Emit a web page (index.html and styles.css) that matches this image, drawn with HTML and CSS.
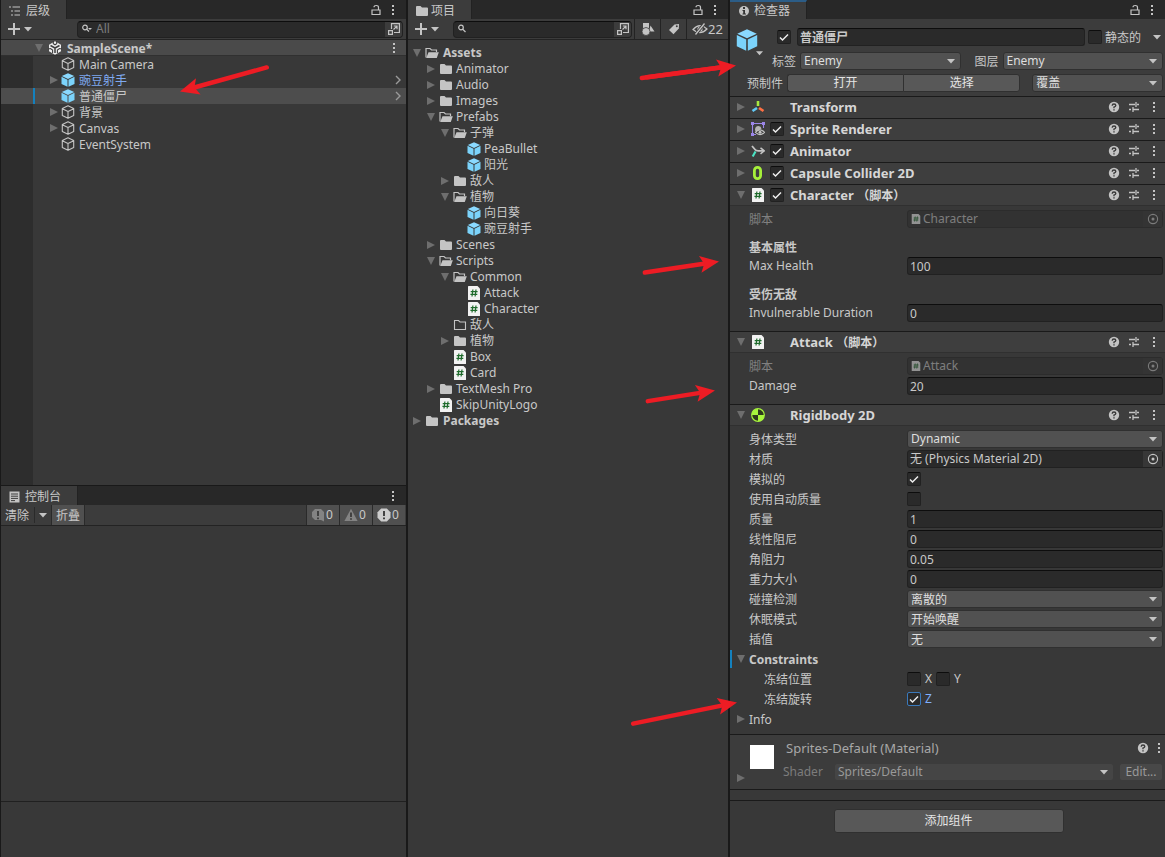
FILE: index.html
```html
<!DOCTYPE html>
<html lang="zh-CN">
<head>
<meta charset="utf-8">
<title>SampleScene</title>
<link rel="stylesheet" href="styles.css">
</head>
<body>
<svg class="sprite" aria-hidden="true">
  <symbol id="cube" viewBox="0 0 14 14"><path d="M7 .8 12.7 3.6V10.4L7 13.3 1.3 10.4V3.6ZM1.3 3.8 7 6.5 12.7 3.8M7 6.5V13.2" fill="none" stroke="#c4c4c4" stroke-width="1.1" stroke-linejoin="round"/></symbol>
  <symbol id="prefab" viewBox="0 0 14 14"><path d="M7 .2 13.2 3 7 5.9.8 3Z" fill="#8ad9ff"/><path d="M.5 3.8 6.5 6.7V13.8L.5 10.9Z" fill="#7bd3fb"/><path d="M13.5 3.8 7.5 6.7V13.8L13.5 10.9Z" fill="#7bd3fb"/></symbol>
  <symbol id="folder" viewBox="0 0 14 14"><path d="M1 3Q1 2 2 2H5.500L7 3.500H12Q13 3.500 13 4.500V11Q13 12 12 12H2Q1 12 1 11Z" fill="#c4c4c4"/></symbol>
  <symbol id="folder-open" viewBox="0 0 14 14"><path d="M1 11.500V2.500H5L6.500 4H11.500V6" fill="none" stroke="#c4c4c4" stroke-width="1.200"/><path d="M3.500 6.200H13.800L11.800 12H1.200Z" fill="#c4c4c4"/></symbol>
  <symbol id="folder-empty" viewBox="0 0 14 14"><path d="M1.500 2.500H5.500L7 4H12.500V11.500H1.500Z" fill="none" stroke="#c4c4c4" stroke-width="1.100"/></symbol>
  <symbol id="script" viewBox="0 0 14 14"><path d="M1 .5Q1 0 1.500 0H10.500L13 2.500V13.500Q13 14 12.500 14H1.500Q1 14 1 13.500Z" fill="#f2f2f2"/><path d="M5.900 3.500 5 10.500M9 3.500 8.100 10.500M3.700 5.600H10.600M3.400 8.400H10.300" stroke="#1f6b2c" stroke-width="1.200" fill="none"/></symbol>
  <symbol id="unity" viewBox="0 0 14 14"><path d="M7 .3 13 3.700V10.300L7 13.700 1 10.300V3.700Z" fill="#eee"/><path d="M7 7V12M7 7 2.500 4.500M7 7 11.500 4.500" stroke="#3e3e3e" stroke-width="1.500"/><path d="M5.300 0V2.800L7 3.800 8.700 2.800V0M0 8 2.500 7.500 4.600 9V12M14 8 11.500 7.500 9.400 9V12" fill="none" stroke="#3e3e3e" stroke-width="1.100"/></symbol>
  <symbol id="lock" viewBox="0 0 10 12"><path d="M1 6H9V10.500H1ZM7.500 6V3.500Q7.500 1.500 5.200 1.500 3 1.500 3 3.200" fill="none" stroke="#c4c4c4" stroke-width="1.200"/></symbol>
  <symbol id="dots" viewBox="0 0 4 12"><path d="M1 1H3V3H1ZM1 5H3V7H1ZM1 9H3V11H1Z" fill="#c4c4c4"/></symbol>
  <symbol id="plus" viewBox="0 0 12 12"><path d="M6 0V12M0 6H12" stroke="#c4c4c4" stroke-width="2"/></symbol>
  <symbol id="down" viewBox="0 0 8 5"><path d="M0 0H8L4 4.500Z" fill="#c4c4c4"/></symbol>
  <symbol id="fold-right" viewBox="0 0 8 8"><path d="M0 0 8 4 0 8Z" fill="#6e6e6e"/></symbol>
  <symbol id="fold-down" viewBox="0 0 8 8"><path d="M0 0H8L4 8Z" fill="#6e6e6e"/></symbol>
  <symbol id="chevron" viewBox="0 0 6 10"><path d="M1 1 5 5 1 9" fill="none" stroke="#9a9a9a" stroke-width="1.400"/></symbol>
  <symbol id="search" viewBox="0 0 10 10"><circle cx="3" cy="3.500" r="2.300" fill="none" stroke="#c4c4c4" stroke-width="1.200"/><path d="M4.600 5.100 7.500 8" stroke="#c4c4c4" stroke-width="1.300"/></symbol>
  <symbol id="search-type" viewBox="0 0 10 10"><circle cx="3" cy="3.500" r="2.300" fill="none" stroke="#c4c4c4" stroke-width="1.200"/><path d="M4.600 5.100 7 7.500" stroke="#c4c4c4" stroke-width="1.300"/><path d="M6 4H10L8 6Z" fill="#c4c4c4"/></symbol>
  <symbol id="popout" viewBox="0 0 12 12"><path d="M3.500 6V.6H11.400V9.500H6M5.500 6.500 8.700 3.300M5.800 3H9V6.200M.6 7.600H4.400V11.400H.6Z" fill="none" stroke="#c4c4c4" stroke-width="1.200"/></symbol>
  <symbol id="shapes" viewBox="0 0 14 14"><path d="M2 1H8V6H2ZM9.500 3.500 13.500 9.500H8Z" fill="#c4c4c4"/><circle cx="5" cy="9.500" r="4" fill="#c4c4c4" stroke="#3c3c3c" stroke-width=".8"/></symbol>
  <symbol id="tag" viewBox="0 0 12 12"><path d="M6.500 1.500 11 1 10.800 5.500 5.500 11.200 1 7Z" fill="#c4c4c4"/><circle cx="8.800" cy="3.300" r="1" fill="#3c3c3c"/></symbol>
  <symbol id="eye-off" viewBox="0 0 16 12"><path d="M1 6.500Q8-1 15 6 8 13 1 6.500Z" fill="none" stroke="#c4c4c4" stroke-width="1.200"/><circle cx="8" cy="6" r="2.600" fill="#c4c4c4"/><path d="M12.500 0 3.500 12" stroke="#3c3c3c" stroke-width="3"/><path d="M12.500.5 3.500 11.500" stroke="#c4c4c4" stroke-width="1.300"/></symbol>
  <symbol id="tree" viewBox="0 0 12 10"><path d="M0 1H2M3.500 1H11M2 5H4M5.500 5H11M2 9H4M5.500 9H11" stroke="#c4c4c4" stroke-width="1.200"/></symbol>
  <symbol id="doc" viewBox="0 0 11 12"><path d="M.5.500H10.500V11.500H.5Z" fill="#c4c4c4"/><path d="M2 3H9M2 5.200H9M2 7.400H9M2 9.600H6" stroke="#3c3c3c"/></symbol>
  <symbol id="info" viewBox="0 0 12 12"><circle cx="6" cy="6" r="5" fill="#c4c4c4"/><path d="M5 2H7V4H5ZM4.500 5H7V8.500H8V9.500H4.500V8.500H5.200V6H4.500Z" fill="#333"/></symbol>
  <symbol id="help" viewBox="0 0 12 12"><circle cx="6" cy="6" r="5.200" fill="#c4c4c4"/><path d="M4.200 4.700Q4.200 3 6 3T7.800 4.600Q7.800 5.600 6 6.100V7.200M6 8.200V9.600" fill="none" stroke="#3a3a3a" stroke-width="1.400"/></symbol>
  <symbol id="sliders" viewBox="0 0 12 12"><path d="M1 3.500H7M9 3.500H11M8 1V6M1 8.500H3M5 8.500H11M5 6V11" fill="none" stroke="#c4c4c4" stroke-width="1.300"/></symbol>
  <symbol id="picker" viewBox="0 0 12 12"><circle cx="6" cy="6" r="4.600" fill="none" stroke="#c4c4c4" stroke-width="1.100"/><circle cx="6" cy="6" r="1.500" fill="#c4c4c4"/></symbol>
  <symbol id="transform" viewBox="0 0 14 14"><path d="M7 1V6" stroke="#a8e840" stroke-width="2.600"/><path d="M6 8 1.500 11" stroke="#62c8f5" stroke-width="2.600"/><path d="M8 8 12.500 11" stroke="#ff7043" stroke-width="2.600"/></symbol>
  <symbol id="sprite-renderer" viewBox="0 0 14 14"><path d="M1.500 12.500V1.500H12.500V6M1.500 12.500H5" fill="none" stroke="#9b86e8" stroke-width="1.100"/><path d="M0 0H3V3H0ZM11 0H14V3H11ZM0 11H3V14H0Z" fill="#9b86e8"/><path d="M4 8Q4 4 7.500 4 10 4 10.500 6.500L5 10.500Z" fill="#b4b4b4"/><path d="M4.500 10.300Q9 5.500 13.500 10.300 9 14.800 4.500 10.300Z" fill="#3e3e3e" stroke="#c4c4c4" stroke-width="1.200"/><circle cx="9" cy="10.200" r="1.500" fill="#c4c4c4"/></symbol>
  <symbol id="animator" viewBox="0 0 14 14"><path d="M1 2 4 5.500Q5 7 8 6.800H12" fill="none" stroke="#c4c4c4" stroke-width="1.800"/><path d="M9.500 3.800 13.300 6.800 9.500 9.800" fill="none" stroke="#c4c4c4" stroke-width="1.500"/><path d="M4.500 7.500 1.700 12.500" stroke="#4be3c4" stroke-width="2.200"/></symbol>
  <symbol id="capsule" viewBox="0 0 14 14"><rect x="3.400" y="1.400" width="6.200" height="11.200" rx="3" fill="none" stroke="#a6f03a" stroke-width="2.800"/></symbol>
  <symbol id="rigidbody" viewBox="0 0 14 14"><circle cx="7" cy="7" r="6.300" fill="#2f3a1c" stroke="#a8f53d" stroke-width="1.200"/><path d="M7 7V.7A6.300 6.300 0 0 0 .7 7ZM7 7V13.300A6.300 6.300 0 0 0 13.300 7Z" fill="#a8f53d"/></symbol>
  <symbol id="log" viewBox="0 0 14 14"><path d="M4 1H10L13 4V13.500L10 12H4L1 9V4Z" fill="#838383"/><path d="M7 3V8M7 9.500V11.300" stroke="#3a3a3a" stroke-width="1.800"/></symbol>
  <symbol id="warn" viewBox="0 0 14 14"><path d="M7 .8 13.600 13H.4Z" fill="#838383"/><path d="M7 4.500V9M7 10.200V11.800" stroke="#3a3a3a" stroke-width="1.800"/></symbol>
  <symbol id="error" viewBox="0 0 14 14"><path d="M4.200.5H9.800L13.500 4.200V9.800L9.800 13.500H4.200L.5 9.800V4.200Z" fill="#cdcdcd"/><path d="M7 3V8M7 9.500V11.300" stroke="#333" stroke-width="1.800"/></symbol>
</svg>

<main class="editor">
  <div class="left">
    <section class="panel hierarchy" aria-label="层级">
      <header class="tabs">
        <button class="tab"><svg class="i12"><use href="#tree"/></svg>层级</button>
        <span class="tools"><svg class="lock"><use href="#lock"/></svg><svg class="dots"><use href="#dots"/></svg></span>
      </header>
      <div class="toolbar">
        <button class="add" aria-label="添加"><svg class="i12"><use href="#plus"/></svg><svg class="down"><use href="#down"/></svg></button>
        <label class="search search-wide"><svg class="i10"><use href="#search-type"/></svg><input type="text" placeholder="All" aria-label="搜索层级"><span class="popout"><svg class="i12"><use href="#popout"/></svg></span></label>
      </div>
      <div class="scene"><svg class="fold"><use href="#fold-down"/></svg><svg class="i14"><use href="#unity"/></svg><b class="name">SampleScene*</b><svg class="dots"><use href="#dots"/></svg></div>
      <ul class="objects">
        <li><i class="fold"></i><svg class="i14"><use href="#cube"/></svg><span class="name">Main Camera</span></li>
        <li class="linked"><svg class="fold"><use href="#fold-right"/></svg><svg class="i14"><use href="#prefab"/></svg><span class="name">豌豆射手</span><svg class="chevron"><use href="#chevron"/></svg></li>
        <li class="selected"><i class="fold"></i><svg class="i14"><use href="#prefab"/></svg><span class="name">普通僵尸</span><svg class="chevron"><use href="#chevron"/></svg></li>
        <li><svg class="fold"><use href="#fold-right"/></svg><svg class="i14"><use href="#cube"/></svg><span class="name">背景</span></li>
        <li><svg class="fold"><use href="#fold-right"/></svg><svg class="i14"><use href="#cube"/></svg><span class="name">Canvas</span></li>
        <li><i class="fold"></i><svg class="i14"><use href="#cube"/></svg><span class="name">EventSystem</span></li>
      </ul>
    </section>
    <section class="panel console" aria-label="控制台">
      <header class="tabs">
        <button class="tab"><svg class="doc"><use href="#doc"/></svg>控制台</button>
        <span class="tools"><svg class="dots"><use href="#dots"/></svg></span>
      </header>
      <div class="toolbar console-bar">
        <button class="clear">清除</button><button class="clear-menu" aria-label="清除选项"><svg class="down"><use href="#down"/></svg></button><button class="toggle">折叠</button>
        <span class="space"></span>
        <button class="toggle count"><svg class="i14"><use href="#log"/></svg>0</button><button class="toggle count"><svg class="i14"><use href="#warn"/></svg>0</button><button class="toggle count"><svg class="i14"><use href="#error"/></svg>0</button>
      </div>
      <div class="log"></div>
      <div class="detail"></div>
    </section>
  </div>

  <section class="panel project" aria-label="项目">
    <header class="tabs">
      <button class="tab"><svg class="i14"><use href="#folder"/></svg>项目</button>
      <span class="tools"><svg class="lock"><use href="#lock"/></svg><svg class="dots"><use href="#dots"/></svg></span>
    </header>
    <div class="toolbar">
      <button class="add" aria-label="创建"><svg class="i12"><use href="#plus"/></svg><svg class="down"><use href="#down"/></svg></button>
      <label class="search"><svg class="i10"><use href="#search"/></svg><input type="text" aria-label="搜索项目"><span class="popout"><svg class="i12"><use href="#popout"/></svg></span></label>
      <button class="filter" aria-label="按类型"><svg class="i14"><use href="#shapes"/></svg></button><button class="filter" aria-label="按标签"><svg class="i12"><use href="#tag"/></svg></button><button class="filter hidden-count"><svg class="eye"><use href="#eye-off"/></svg>22</button>
    </div>
    <ul class="files">
      <li><svg class="fold"><use href="#fold-down"/></svg><svg class="i14"><use href="#folder-open"/></svg><b>Assets</b></li>
      <li class="d1"><svg class="fold"><use href="#fold-right"/></svg><svg class="i14"><use href="#folder"/></svg>Animator</li>
      <li class="d1"><svg class="fold"><use href="#fold-right"/></svg><svg class="i14"><use href="#folder"/></svg>Audio</li>
      <li class="d1"><svg class="fold"><use href="#fold-right"/></svg><svg class="i14"><use href="#folder"/></svg>Images</li>
      <li class="d1"><svg class="fold"><use href="#fold-down"/></svg><svg class="i14"><use href="#folder-open"/></svg>Prefabs</li>
      <li class="d2"><svg class="fold"><use href="#fold-down"/></svg><svg class="i14"><use href="#folder-open"/></svg>子弹</li>
      <li class="d3"><i class="fold"></i><svg class="i14"><use href="#prefab"/></svg>PeaBullet</li>
      <li class="d3"><i class="fold"></i><svg class="i14"><use href="#prefab"/></svg>阳光</li>
      <li class="d2"><svg class="fold"><use href="#fold-right"/></svg><svg class="i14"><use href="#folder"/></svg>敌人</li>
      <li class="d2"><svg class="fold"><use href="#fold-down"/></svg><svg class="i14"><use href="#folder-open"/></svg>植物</li>
      <li class="d3"><i class="fold"></i><svg class="i14"><use href="#prefab"/></svg>向日葵</li>
      <li class="d3"><i class="fold"></i><svg class="i14"><use href="#prefab"/></svg>豌豆射手</li>
      <li class="d1"><svg class="fold"><use href="#fold-right"/></svg><svg class="i14"><use href="#folder"/></svg>Scenes</li>
      <li class="d1"><svg class="fold"><use href="#fold-down"/></svg><svg class="i14"><use href="#folder-open"/></svg>Scripts</li>
      <li class="d2"><svg class="fold"><use href="#fold-down"/></svg><svg class="i14"><use href="#folder-open"/></svg>Common</li>
      <li class="d3"><i class="fold"></i><svg class="i14"><use href="#script"/></svg>Attack</li>
      <li class="d3"><i class="fold"></i><svg class="i14"><use href="#script"/></svg>Character</li>
      <li class="d2"><i class="fold"></i><svg class="i14"><use href="#folder-empty"/></svg>敌人</li>
      <li class="d2"><svg class="fold"><use href="#fold-right"/></svg><svg class="i14"><use href="#folder"/></svg>植物</li>
      <li class="d2"><i class="fold"></i><svg class="i14"><use href="#script"/></svg>Box</li>
      <li class="d2"><i class="fold"></i><svg class="i14"><use href="#script"/></svg>Card</li>
      <li class="d1"><svg class="fold"><use href="#fold-right"/></svg><svg class="i14"><use href="#folder"/></svg>TextMesh Pro</li>
      <li class="d1"><i class="fold"></i><svg class="i14"><use href="#script"/></svg>SkipUnityLogo</li>
      <li><svg class="fold"><use href="#fold-right"/></svg><svg class="i14"><use href="#folder"/></svg><b>Packages</b></li>
    </ul>
  </section>

  <section class="panel inspector" aria-label="检查器">
    <header class="tabs">
      <button class="tab focused"><svg class="i12"><use href="#info"/></svg>检查器</button>
      <span class="tools"><svg class="lock"><use href="#lock"/></svg><svg class="dots"><use href="#dots"/></svg></span>
    </header>

    <div class="object">
      <div class="object-icon"><svg class="i22"><use href="#prefab"/></svg><svg class="down"><use href="#down"/></svg></div>
      <div class="object-name">
        <input type="checkbox" checked aria-label="激活">
        <input class="text bold" type="text" value="普通僵尸" aria-label="名称">
        <label class="static"><input type="checkbox"><span>静态的</span></label>
        <svg class="down"><use href="#down"/></svg>
      </div>
      <div class="object-tags">
        <label for="tag-select">标签</label><select id="tag-select"><option>Enemy</option></select>
        <label class="layer" for="layer-select">图层</label><select id="layer-select"><option>Enemy</option></select>
      </div>
      <div class="object-prefab">
        <span>预制件</span>
        <div class="pair"><button class="push">打开</button><button class="push">选择</button></div>
        <select class="overrides" aria-label="覆盖"><option>覆盖</option></select>
      </div>
    </div>

    <h2 class="component"><svg class="fold"><use href="#fold-right"/></svg><svg class="i14"><use href="#transform"/></svg><i class="box"></i><span class="title">Transform</span><svg class="i12"><use href="#help"/></svg><svg class="i12"><use href="#sliders"/></svg><svg class="dots"><use href="#dots"/></svg></h2>
    <h2 class="component"><svg class="fold"><use href="#fold-right"/></svg><svg class="i14"><use href="#sprite-renderer"/></svg><input type="checkbox" checked aria-label="Sprite Renderer"><span class="title">Sprite Renderer</span><svg class="i12"><use href="#help"/></svg><svg class="i12"><use href="#sliders"/></svg><svg class="dots"><use href="#dots"/></svg></h2>
    <h2 class="component"><svg class="fold"><use href="#fold-right"/></svg><svg class="i14"><use href="#animator"/></svg><input type="checkbox" checked aria-label="Animator"><span class="title">Animator</span><svg class="i12"><use href="#help"/></svg><svg class="i12"><use href="#sliders"/></svg><svg class="dots"><use href="#dots"/></svg></h2>
    <h2 class="component"><svg class="fold"><use href="#fold-right"/></svg><svg class="i14"><use href="#capsule"/></svg><input type="checkbox" checked aria-label="Capsule Collider 2D"><span class="title">Capsule Collider 2D</span><svg class="i12"><use href="#help"/></svg><svg class="i12"><use href="#sliders"/></svg><svg class="dots"><use href="#dots"/></svg></h2>

    <h2 class="component open"><svg class="fold"><use href="#fold-down"/></svg><svg class="i14"><use href="#script"/></svg><input type="checkbox" checked aria-label="Character"><span class="title">Character <small>（脚本）</small></span><svg class="i12"><use href="#help"/></svg><svg class="i12"><use href="#sliders"/></svg><svg class="dots"><use href="#dots"/></svg></h2>
    <div class="fields">
      <div class="field off"><span>脚本</span><div class="ref"><svg class="i10"><use href="#script"/></svg><span class="name">Character</span><span class="pick"><svg class="i12"><use href="#picker"/></svg></span></div></div>
      <h3>基本属性</h3>
      <div class="field"><label for="health">Max Health</label><input class="text" id="health" type="text" value="100"></div>
      <h3>受伤无敌</h3>
      <div class="field"><label for="invulnerable">Invulnerable Duration</label><input class="text" id="invulnerable" type="text" value="0"></div>
    </div>

    <h2 class="component open"><svg class="fold"><use href="#fold-down"/></svg><svg class="i14"><use href="#script"/></svg><i class="box"></i><span class="title">Attack <small>（脚本）</small></span><svg class="i12"><use href="#help"/></svg><svg class="i12"><use href="#sliders"/></svg><svg class="dots"><use href="#dots"/></svg></h2>
    <div class="fields">
      <div class="field off"><span>脚本</span><div class="ref"><svg class="i10"><use href="#script"/></svg><span class="name">Attack</span><span class="pick"><svg class="i12"><use href="#picker"/></svg></span></div></div>
      <div class="field"><label for="damage">Damage</label><input class="text" id="damage" type="text" value="20"></div>
    </div>

    <h2 class="component open"><svg class="fold"><use href="#fold-down"/></svg><svg class="i14"><use href="#rigidbody"/></svg><i class="box"></i><span class="title">Rigidbody 2D</span><svg class="i12"><use href="#help"/></svg><svg class="i12"><use href="#sliders"/></svg><svg class="dots"><use href="#dots"/></svg></h2>
    <div class="fields body">
      <div class="field"><label for="body-type">身体类型</label><select id="body-type"><option>Dynamic</option></select></div>
      <div class="field"><span>材质</span><div class="ref"><span class="name">无 (Physics Material 2D)</span><span class="pick"><svg class="i12"><use href="#picker"/></svg></span></div></div>
      <div class="field"><label for="simulated">模拟的</label><input id="simulated" type="checkbox" checked></div>
      <div class="field"><label for="auto-mass">使用自动质量</label><input id="auto-mass" type="checkbox"></div>
      <div class="field"><label for="mass">质量</label><input class="text" id="mass" type="text" value="1"></div>
      <div class="field"><label for="linear">线性阻尼</label><input class="text" id="linear" type="text" value="0"></div>
      <div class="field"><label for="angular">角阻力</label><input class="text" id="angular" type="text" value="0.05"></div>
      <div class="field"><label for="gravity">重力大小</label><input class="text" id="gravity" type="text" value="0"></div>
      <div class="field"><label for="collision">碰撞检测</label><select class="han" id="collision"><option>离散的</option></select></div>
      <div class="field"><label for="sleep">休眠模式</label><select class="han" id="sleep"><option>开始唤醒</option></select></div>
      <div class="field"><label for="interpolate">插值</label><select class="han" id="interpolate"><option>无</option></select></div>
      <div class="group changed"><svg class="fold"><use href="#fold-down"/></svg><b>Constraints</b></div>
      <div class="field sub"><span>冻结位置</span><div class="axes"><label><input type="checkbox">X</label><label><input type="checkbox">Y</label></div></div>
      <div class="field sub"><span>冻结旋转</span><div class="axes"><label class="active"><input type="checkbox" checked>Z</label></div></div>
      <div class="group"><svg class="fold"><use href="#fold-right"/></svg><span>Info</span></div>
    </div>

    <div class="material">
      <svg class="fold"><use href="#fold-right"/></svg>
      <div class="swatch"></div>
      <div class="material-info">
        <div class="material-title"><span class="title">Sprites-Default (Material)</span><svg class="i12"><use href="#help"/></svg><svg class="dots"><use href="#dots"/></svg></div>
        <div class="shader"><label for="shader">Shader</label><select id="shader" disabled><option>Sprites/Default</option></select><button class="push" disabled>Edit...</button></div>
      </div>
    </div>
    <div class="spacer"></div>
    <div class="footer"><button class="push add-component">添加组件</button></div>
  </section>
</main>

<svg class="marks" viewBox="0 0 1165 857" preserveAspectRatio="xMinYMin meet" aria-hidden="true">
  <defs><g id="mark"><path d="M-90 0H-12" stroke="#ed1c24" stroke-width="4.500" stroke-linecap="round"/><path d="M0 0-19-8.500-15 0-19 8.500Z" fill="#ed1c24"/></g></defs>
  <g transform="translate(180 91.500) rotate(164.500)"><use href="#mark"/></g>
  <g transform="translate(736 65.500) rotate(-7.500)"><path d="M-95 0H-12" stroke="#ed1c24" stroke-width="4.500" stroke-linecap="round"/><use href="#mark"/></g>
  <g transform="translate(719 261.500) rotate(-8.500)"><path d="M-75 0H-12" stroke="#ed1c24" stroke-width="4.500" stroke-linecap="round"/><path d="M0 0-19-8.500-15 0-19 8.500Z" fill="#ed1c24"/></g>
  <g transform="translate(715 390.500) rotate(-9)"><path d="M-68 0H-12" stroke="#ed1c24" stroke-width="4.500" stroke-linecap="round"/><path d="M0 0-19-8.500-15 0-19 8.500Z" fill="#ed1c24"/></g>
  <g transform="translate(737 702.500) rotate(-11.500)"><path d="M-106 0H-12" stroke="#ed1c24" stroke-width="4.500" stroke-linecap="round"/><path d="M0 0-19-8.500-15 0-19 8.500Z" fill="#ed1c24"/></g>
</svg>
</body>
</html>
```
FILE: styles.css
```css
* { box-sizing: border-box; }
html, body { height: 100%; }
body {
  margin: 0;
  background: #191919;
  color: #c8c8c8;
  font: 12px/16px "Noto Sans", "Noto Sans CJK SC", sans-serif;
  position: relative;
}
button, input, select { font: inherit; color: inherit; margin: 0; }
button { background: none; border: 0; padding: 0; display: flex; align-items: center; }
ul { list-style: none; margin: 0; padding: 0; }
svg { flex: none; display: block; }
.sprite { position: absolute; width: 0; height: 0; }
.i10 { width: 10px; height: 10px; }
.i12 { width: 12px; height: 12px; }
.i14 { width: 14px; height: 14px; }
.i22 { width: 22px; height: 22px; }
.doc { width: 11px; height: 12px; }
.eye { width: 16px; height: 12px; }
.lock { width: 10px; height: 12px; }
.dots { width: 4px; height: 12px; }
.down { width: 8px; height: 5px; }
.chevron { width: 6px; height: 10px; }
.fold { width: 8px; height: 8px; flex: none; }
.name { flex: 1; }

.editor {
  display: grid;
  grid-template-columns: 406fr 320fr 435fr;
  column-gap: 2px;
  min-height: 100%;
}
.left { display: grid; grid-template-rows: 485fr 371fr; row-gap: 1px; padding-left: 1px; }
.panel { background: #383838; display: flex; flex-direction: column; min-width: 0; }

/* Tabs and toolbars */
.tabs { height: 19px; background: #282828; display: flex; justify-content: space-between; }
.tab { background: #3c3c3c; gap: 5px; padding: 3px 16px 0 8px; border-right: 1px solid #222; }
.project .tab { gap: 2px; padding-left: 7px; }
.tab.focused { border-top: 2px solid #2c5d87; padding-top: 1px; gap: 4px; }
.tools { display: flex; align-items: center; gap: 10px; padding-right: 11px; }
.toolbar { height: 21px; background: #3c3c3c; border-bottom: 1px solid #232323; display: flex; align-items: center; }
.add { gap: 4px; padding: 0 0 0 7px; }
.search {
  flex: 1; height: 17px; margin: 0 2px 0 14px; padding-left: 4px;
  display: flex; align-items: center; gap: 4px;
  background: #2a2a2a; border: 1px solid #212121; border-top-color: #0d0d0d; border-radius: 4px;
  overflow: hidden;
}
.search-wide { margin: 0 3px 0 45px; }
.search input { flex: 1; min-width: 0; background: none; border: 0; padding: 0; outline: 0; }
.search input::placeholder { color: #7c7c7c; opacity: 1; }
.popout { width: 17px; height: 16px; background: #3c3c3c; display: grid; place-items: center; }
.filter { width: 26px; height: 20px; border-left: 1px solid #232323; justify-content: center; }
.hidden-count { width: 42px; gap: 0; font-size: 13px; }

/* Hierarchy */
.scene { height: 16px; background: #4a4a4a; border-bottom: 1px solid #303030; display: flex; align-items: center; gap: 5px; padding: 0 10px 0 34px; }
.scene .name, .objects .name { padding-top: 2px; }
.objects { flex: 1; background: linear-gradient(90deg, #2d2d2d 32px, #383838 32px); }
.objects li { height: 16px; display: flex; align-items: center; gap: 3px; padding: 0 5px 0 49px; }
.objects .linked { color: #7fa9f0; }
.objects .i14 { margin-right: 1px; }
.objects .selected { background: linear-gradient(90deg, #4d4d4d 32px, #1481be 32px, #1481be 34px, #4d4d4d 34px); }

/* Project */
.files { padding-top: 5px; }
.files li { height: 16px; display: flex; align-items: center; padding-left: 5px; }
.files .i14 { margin: 0 3px 0 4px; }
.files b { padding-left: 1px; }
.files .d1 { padding-left: 19px; }
.files .d2 { padding-left: 33px; }
.files .d3 { padding-left: 47px; }

/* Console */
.console-bar { align-items: stretch; padding-right: 1px; }
.clear { padding: 1px 5px 0 4px; }
.clear-menu { border-left: 1px solid #2a2a2a; margin: 2px 0; padding: 0 4px 0 4px; }
.toggle { background: #505050; border: solid #2a2a2a; border-width: 0 0 0 1px; padding: 0 4px; }
.toggle:nth-child(3) { border-right-width: 1px; padding-top: 1px; }
.space { flex: 1; }
.count { width: 33px; gap: 1px; }
.console .log { flex: 1; }
.detail { height: 56px; border-top: 1px solid #202020; }

/* Form controls */
input[type="checkbox"] {
  appearance: none; flex: none; width: 14px; height: 14px;
  background: #2a2a2a center / 10px 10px no-repeat;
  border: 1px solid #212121; border-top-color: #0d0d0d; border-radius: 2px;
}
input[type="checkbox"]:checked { background-image: url("data:image/svg+xml,%3Csvg xmlns='http://www.w3.org/2000/svg' viewBox='0 0 10 10'%3E%3Cpath d='M1 5.500 3.500 8 9 2.500' fill='none' stroke='%23eee' stroke-width='1.500'/%3E%3C/svg%3E"); }
.text {
  min-width: 0; width: 100%; height: 18px; padding: 0 2px;
  background: #2a2a2a; border: 1px solid #212121; border-top-color: #0d0d0d; border-radius: 3px;
}
.bold { font-weight: 700; }
select {
  appearance: none; min-width: 0; width: 100%; height: 18px; padding: 0 16px 0 3px;
  border: 1px solid #303030; border-radius: 3px; color: #dedede;
  background: #515151 url("data:image/svg+xml,%3Csvg xmlns='http://www.w3.org/2000/svg' viewBox='0 0 8 5'%3E%3Cpath d='M0 0H8L4 4.500Z' fill='%23c4c4c4'/%3E%3C/svg%3E") right 5px center / 8px 5px no-repeat;
}
.han { padding-top: 1px; }
.push { justify-content: center; background: #585858; border: 1px solid #303030; border-radius: 3px; height: 18px; color: #e4e4e4; }

/* Inspected object */
.object { display: grid; grid-template-columns: 42px 1fr; background: #3c3c3c; padding: 9px 2px 4px 0; }
.object-icon { grid-row: 1 / 3; padding: 1px 0 0 6px; }
.object-icon .down { margin-left: 20px; width: 7px; }
.object-name { display: flex; align-items: center; gap: 6px; padding: 0 2px 0 5px; margin-bottom: 6px; }
.static { display: flex; align-items: center; gap: 3px; flex: none; margin: 0 6px 0 -3px; }
.static span, .object-tags label, .object-prefab > span { padding-top: 2px; }
.object-tags { display: flex; align-items: center; gap: 4px; margin-bottom: 4px; }
.object-tags label { flex: none; }
.object-tags select { flex: 1; }
.object-tags .layer { margin-left: 10px; }
.object-prefab { grid-column: 1 / 3; display: flex; align-items: center; padding-left: 17px; gap: 4px; }
.pair { flex: 232; display: flex; margin-right: 8px; }
.pair .push { flex: 1; }
.pair .push:first-child { border-radius: 3px 0 0 3px; border-right: 0; }
.pair .push:last-child { border-radius: 0 3px 3px 0; }
.overrides { flex: 109; width: auto; }

/* Components */
.component {
  height: 22px; margin: 0; padding: 0 9px 0 7px;
  display: flex; align-items: center;
  background: #3e3e3e; border: solid #1a1a1a; border-width: 1px 0; border-bottom-color: #3e3e3e;
  font-size: 13px; font-weight: 700; color: #d6d6d6;
}
.component.open { border-bottom-color: #303030; }
.component small { font-size: 12px; }
.component .i14 { margin: 0 5px 0 6px; }
.box { width: 14px; }
.title { flex: 1; margin-left: 6px; }
.component .i12 { margin-right: 8px; }
.component .dots { margin-left: 4px; }
.fields { display: flex; flex-direction: column; gap: 2px; padding: 4px 2px 9px 19px; }
.body { padding-bottom: 6px; }
.fields h3 { margin: 8px 0 0; height: 17px; font-size: 12px; line-height: 20px; font-weight: 700; }
.field { display: grid; grid-template-columns: 158px 1fr; align-items: center; height: 18px; }
.body .field > label, .field > span { padding-top: 1px; }
.ref {
  height: 18px; display: flex; align-items: center; padding-left: 2px; gap: 2px;
  background: #2a2a2a; border: 1px solid #212121; border-radius: 3px;
}
.off .ref { padding-left: 3px; }
.pick { width: 19px; align-self: stretch; display: grid; place-items: center; background: #373737; }
.off > span, .off .ref > * { opacity: .5; }
.off .ref { background: #323232; border-color: #2c2c2c; }
.group { height: 18px; display: flex; align-items: center; gap: 4px; padding-left: 7px; margin-left: -19px; border-left: 0 solid #1481be; }
.group > b, .group > span { padding-top: 2px; }
.changed { border-left-width: 2px; padding-left: 5px; }
.field.sub > span { padding-left: 15px; }
.axes { display: flex; gap: 4px; }
.axes label { display: flex; align-items: center; gap: 4px; }
.axes .active { color: #7fb0ff; }
.active input[type="checkbox"] { border-color: #3a79bb; }

/* Material */
.material { display: flex; border-top: 1px solid #1a1a1a; border-bottom: 1px solid #1a1a1a; background: #3c3c3c; padding: 4px 2px 7px 7px; height: 56px; }
.material .fold { align-self: flex-end; }
.swatch { width: 24px; height: 24px; margin: 6px 9px 0 5px; background: #fff; }
.material-info { flex: 1; min-width: 0; }
.material-title { display: flex; align-items: center; height: 18px; gap: 8px; color: #a8a8a8; }
.material-title .title { margin-left: 3px; font-size: 13px; }
.material-title .dots { margin-right: 2px; }
.shader { display: flex; align-items: center; gap: 5px; margin-top: 6px; color: #7c7c7c; }
.shader label { width: 46px; }
.shader select { flex: 1; background-color: #454545; border-color: #3c3c3c; color: #999; opacity: 1; }
.shader .push { width: 44px; background: #484848; border-color: #3c3c3c; color: #999; }
.spacer { height: 11px; border-bottom: 1px solid #1a1a1a; }
.footer { display: flex; justify-content: center; padding: 8px 0 0 2px; }
.add-component { width: 230px; height: 24px; }

.marks { position: absolute; inset: 0; width: 100%; height: 100%; pointer-events: none; }
```
